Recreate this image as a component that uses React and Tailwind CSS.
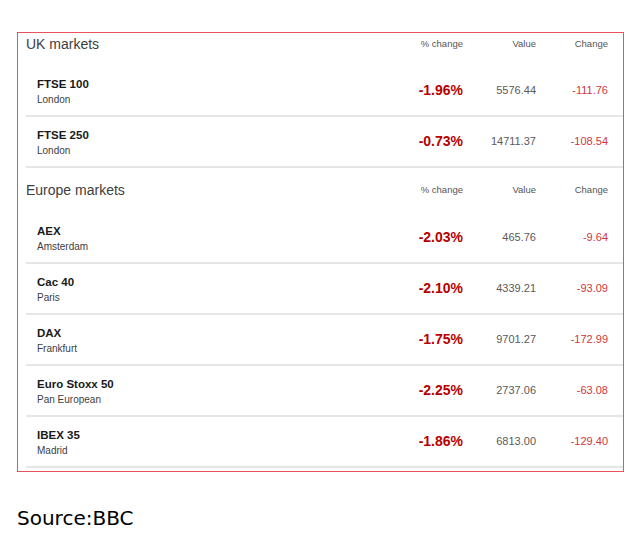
import React from "react";

const uk = [
  { name: "FTSE 100", place: "London", pct: "-1.96%", value: "5576.44", change: "-111.76" },
  { name: "FTSE 250", place: "London", pct: "-0.73%", value: "14711.37", change: "-108.54" },
];

const europe = [
  { name: "AEX", place: "Amsterdam", pct: "-2.03%", value: "465.76", change: "-9.64" },
  { name: "Cac 40", place: "Paris", pct: "-2.10%", value: "4339.21", change: "-93.09" },
  { name: "DAX", place: "Frankfurt", pct: "-1.75%", value: "9701.27", change: "-172.99" },
  { name: "Euro Stoxx 50", place: "Pan European", pct: "-2.25%", value: "2737.06", change: "-63.08" },
  { name: "IBEX 35", place: "Madrid", pct: "-1.86%", value: "6813.00", change: "-129.40" },
];

const Heading = ({ title, top }) => (
  <div className={`flex items-center pr-[15px] ${top}`}>
    <div className="flex-1 text-[14px] text-[#404040]">{title}</div>
    <div className="w-[80px] text-right text-[9.5px] text-[#555]">% change</div>
    <div className="w-[73px] text-right text-[9.5px] text-[#555]">Value</div>
    <div className="w-[72px] text-right text-[9.5px] text-[#555]">Change</div>
  </div>
);

const Row = ({ name, place, pct, value, change }) => (
  <div className="flex items-center h-[51px] border-b-2 border-[#e6e6e6] pl-[11px] pr-[15px]">
    <div className="flex-1 flex flex-col pt-[2px]">
      <span className="text-[11.5px] font-bold text-[#1a1a1a] leading-[16px]">{name}</span>
      <span className="text-[10px] text-[#404040] leading-[16px]">{place}</span>
    </div>
    <div className="w-[80px] text-right text-[14px] font-bold text-[#b80000]">{pct}</div>
    <div className="w-[73px] text-right text-[11px] text-[#5a5a5a]">{value}</div>
    <div className="w-[72px] text-right text-[11px] text-[#d0363d]">{change}</div>
  </div>
);

export default function App() {
  return (
    <div className="w-[630px] h-[535px] bg-white font-['Liberation_Sans',Arial,sans-serif]">
      <div className="pt-[32px] pl-[17px]">
        <div className="w-[607px] h-[440px] border border-[#e9525a] pl-[8px] overflow-hidden">
          <Heading title="UK markets" top="h-[22px]" />
          <div className="h-[11px]" />
          {uk.map((r) => (
            <Row key={r.name} {...r} />
          ))}
          <Heading title="Europe markets" top="h-[45px]" />
          {europe.map((r) => (
            <Row key={r.name} {...r} />
          ))}
        </div>
      </div>
      <div className="pl-[17px] pt-[31px] text-[20px] text-black font-['DejaVu_Sans',Verdana,sans-serif]">
        Source:BBC
      </div>
    </div>
  );
}
